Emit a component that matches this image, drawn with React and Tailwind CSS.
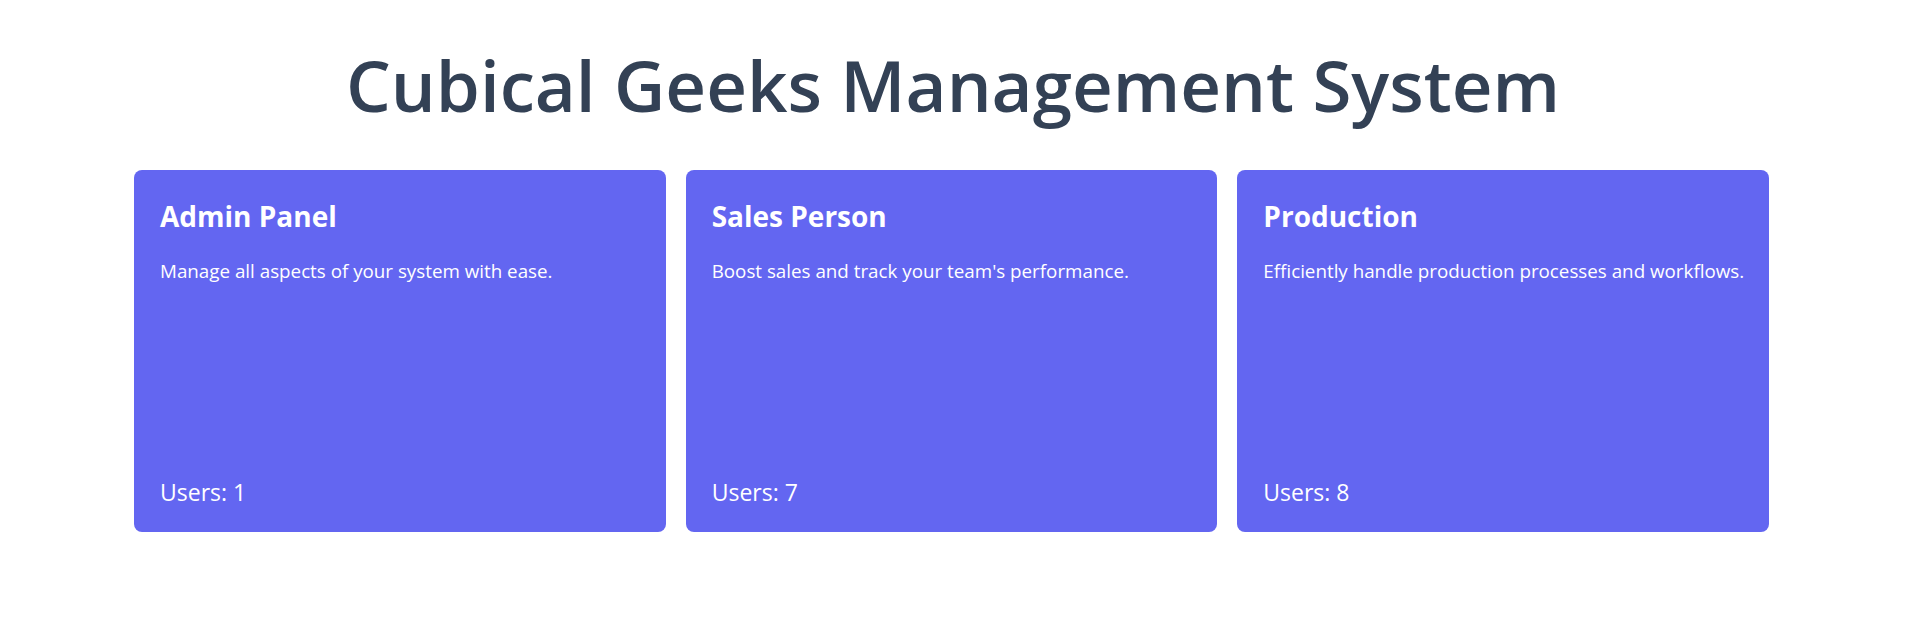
import React from 'react';

const roles = [
  { title: 'Admin Panel', text: 'Manage all aspects of your system with ease.', users: 1 },
  { title: 'Sales Person', text: "Boost sales and track your team's performance.", users: 7 },
  { title: 'Production', text: 'Efficiently handle production processes and workflows.', users: 8 },
];

const RoleCard = ({ role }) => (
  <div className="flex h-[362px] flex-col rounded-lg bg-[#6366f1] pl-[26px] pr-[8px] pt-[28px] pb-[26px] text-white">
    <h2 className="text-[28px] font-bold leading-[36px]">{role.title}</h2>
    <p className="mt-[24px] text-[18.8px] leading-[26px] whitespace-nowrap">{role.text}</p>
    <p className="mt-auto text-[23px] leading-[28px]">Users: {role.users}</p>
  </div>
);

const App = () => {
  return (
    <div className="min-h-screen bg-white font-['Open_Sans',sans-serif]">
      <h1 className="pt-[40px] text-center text-[70.8px] leading-[90px] font-semibold text-[#334155]">
        Cubical Geeks Management System
      </h1>

      <div className="mt-[40px] grid grid-cols-3 gap-[20px] pl-[134px] pr-[137px]">
        {roles.map((role) => (
          <RoleCard key={role.title} role={role} />
        ))}
      </div>
    </div>
  );
};

export default App;
